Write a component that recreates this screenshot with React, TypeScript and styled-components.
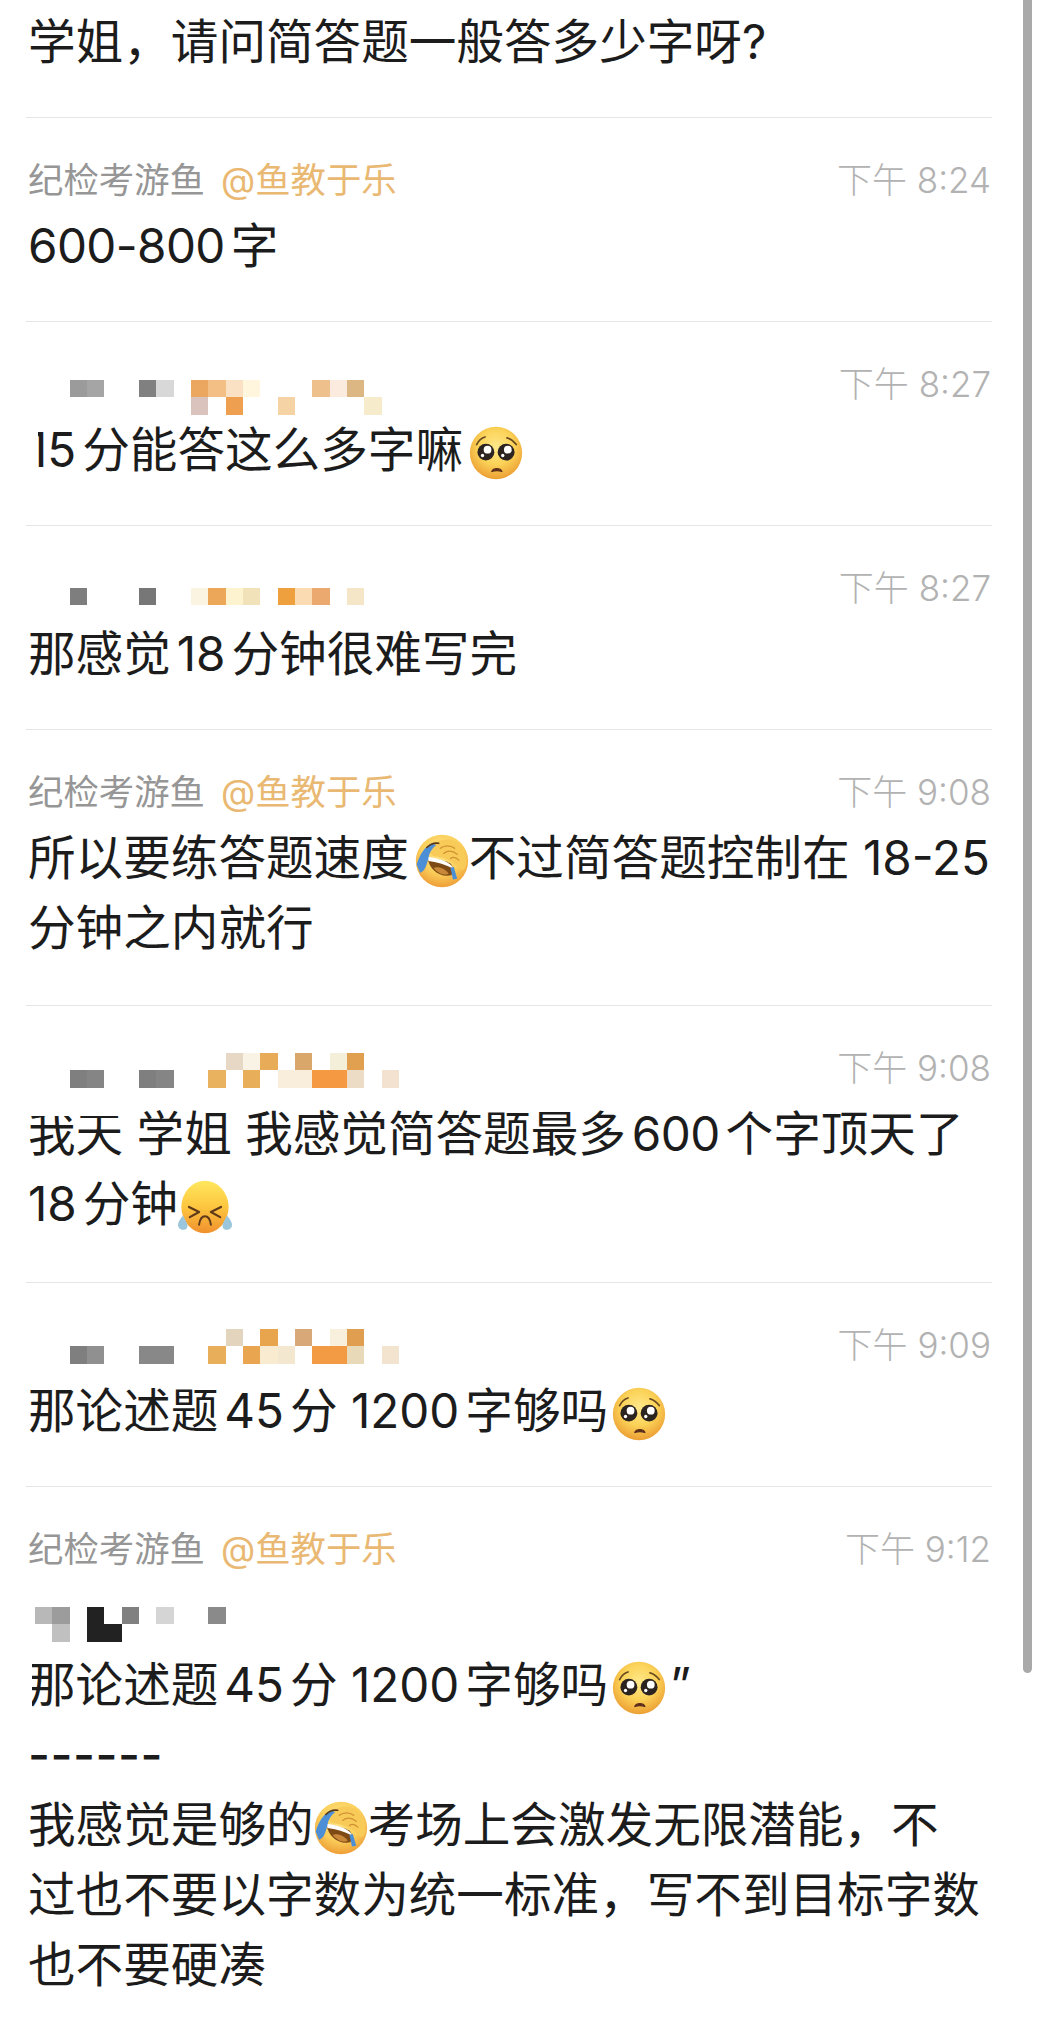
import styled, { createGlobalStyle } from 'styled-components';

const CELL = 17.33;
const COLUMNS = 21;

const GlobalStyle = createGlobalStyle`
  html, body {
    margin: 0;
    padding: 0;
    background: #fff;
  }
  body {
    font-family: Inter, "Noto Sans CJK SC", sans-serif;
    color: #1c1c1c;
  }
`;

const Page = styled.div`
  position: relative;
  width: 1041px;
  height: 2030px;
  overflow: hidden;
  box-sizing: border-box;
  padding: 7px 49px 0 26px;
`;

const ScrollThumb = styled.div`
  position: absolute;
  top: -10px;
  left: 1023px;
  width: 9px;
  height: 1683px;
  border-radius: 5px;
  background: #a9a9a9;
`;

const Row = styled.section<{ $tail?: number; $first?: boolean }>`
  padding: ${({ $first }) => ($first ? '0' : '39px')} 0 ${({ $tail }) => $tail ?? 40}px 0;
  border-bottom: 1px solid #e6e6e6;
`;

const LastRow = styled.section`
  padding-top: 39px;
`;

const Header = styled.header`
  display: flex;
  justify-content: space-between;
  align-items: center;
  height: 48px;
  margin-bottom: 6px;
  padding: 0 1px 0 2px;
`;

const Sender = styled.div`
  font-size: 35.4px;
  line-height: 48px;
  color: #969696;
`;

const Mention = styled.span`
  margin-left: 16px;
  color: #e9b872;
`;

const Time = styled.time`
  font-size: 35px;
  line-height: 46px;
  padding-bottom: 2px;
  color: #b2b2b2;
  font-weight: 300;
`;

const Mosaic = styled.div<{ $top: number }>`
  display: grid;
  grid-template-columns: repeat(${COLUMNS}, ${CELL}px);
  grid-auto-rows: ${CELL}px;
  align-self: flex-start;
  margin: ${({ $top }) => $top}px 0 0 7px;
`;

const QuoteMosaic = styled(Mosaic)`
  margin: 33px 0 8px 9px;
`;

const Cell = styled.i<{ $color: string }>`
  background: ${({ $color }) => $color || 'transparent'};
`;

const Body = styled.div`
  font-size: 47.6px;
  line-height: 70px;
  padding-left: 2px;
  text-autospace: normal;
`;

const Line = styled.div`
  position: relative;
  white-space: nowrap;
`;

const Num = styled.span`
  letter-spacing: -0.6px;
`;

const Mask = styled.span<{ $w: number; $h: number; $y?: number }>`
  position: absolute;
  left: 0;
  top: ${({ $y }) => $y ?? 0}px;
  width: ${({ $w }) => $w}px;
  height: ${({ $h }) => $h}px;
  background: #fff;
`;

const Dashes = styled.span`
  letter-spacing: 0.5px;
  font-weight: 500;
`;

const EmojiBox = styled.svg<{ $before?: number; $after?: number }>`
  display: inline-block;
  width: 54px;
  height: 54px;
  vertical-align: -13px;
  margin: 0 ${({ $after }) => $after ?? 0}px 0 ${({ $before }) => $before ?? 6}px;
`;

type EmojiProps = { before?: number; after?: number };

function Pleading({ before, after }: EmojiProps) {
  return (
    <EmojiBox viewBox="0 0 64 64" $before={before} $after={after}>
      <defs>
        <radialGradient id="plead-face" cx="50%" cy="38%" r="62%">
          <stop offset="0%" stopColor="#ffe88a" />
          <stop offset="55%" stopColor="#fbd257" />
          <stop offset="100%" stopColor="#ec9f34" />
        </radialGradient>
      </defs>
      <circle cx="32" cy="32" r="31" fill="url(#plead-face)" />
      <path d="M9 22 C11 18 15 14 19 13" fill="none" stroke="#6b4a20" strokeWidth="2" strokeLinecap="round" />
      <path d="M56 22 C53 18 49 15 45 14" fill="none" stroke="#6b4a20" strokeWidth="2" strokeLinecap="round" />
      <circle cx="20" cy="31" r="10" fill="#2b2320" />
      <circle cx="44" cy="31" r="10" fill="#2b2320" />
      <circle cx="22" cy="28" r="4.6" fill="#fff" />
      <circle cx="46" cy="28" r="4.6" fill="#fff" />
      <circle cx="16" cy="35" r="2" fill="#fff" />
      <circle cx="40" cy="35" r="2" fill="#fff" />
      <path d="M27 54 C29 49.5 37 49.5 39 54 C35 52.5 31 52.5 27 54 Z" fill="#5a2c1a" stroke="#5a2c1a" strokeWidth="1.4" strokeLinejoin="round" />
    </EmojiBox>
  );
}

function Squint({ before, after }: EmojiProps) {
  return (
    <EmojiBox viewBox="0 0 64 64" $before={before} $after={after}>
      <defs>
        <linearGradient id="squint-face" x1="0" y1="0" x2="0" y2="1">
          <stop offset="0%" stopColor="#ffe75e" />
          <stop offset="50%" stopColor="#fdc63f" />
          <stop offset="100%" stopColor="#f0902e" />
        </linearGradient>
      </defs>
      <ellipse cx="32" cy="32" rx="28" ry="31" fill="url(#squint-face)" />
      <path d="M13 32 L25 38 L14 44" fill="none" stroke="#5e3a1a" strokeWidth="2.6" strokeLinecap="round" strokeLinejoin="round" />
      <path d="M51 32 L39 38 L50 44" fill="none" stroke="#5e3a1a" strokeWidth="2.6" strokeLinecap="round" strokeLinejoin="round" />
      <path d="M25 53 C26 46 29 43 32 43 C35 43 38 46 39 53" fill="none" stroke="#5e3a1a" strokeWidth="2.4" strokeLinecap="round" />
      <path d="M6 42 C2 47 0 50 0 53 C0 57 3 59 6 59 C10 59 12 56 11 52 Z" fill="#9cc6dc" />
      <path d="M58 42 C62 47 64 50 64 53 C64 57 61 59 58 59 C54 59 52 56 53 52 Z" fill="#9cc6dc" />
    </EmojiBox>
  );
}

function Facepalm({ before, after }: EmojiProps) {
  return (
    <EmojiBox viewBox="0 0 64 64" $before={before} $after={after}>
      <defs>
        <radialGradient id="palm-face" cx="50%" cy="35%" r="65%">
          <stop offset="0%" stopColor="#ffe68a" />
          <stop offset="60%" stopColor="#fbcf5b" />
          <stop offset="100%" stopColor="#ee9f38" />
        </radialGradient>
      </defs>
      <circle cx="32" cy="32" r="31" fill="url(#palm-face)" />
      <path d="M15 29 C17 41 28 52 43 49 C46 44 45 38 42 35 C34 31 24 29 15 29 Z" fill="#7d4a16" />
      <path d="M15 27 C24 28 36 31 43 37 L45 41 C36 36 25 33 16 32 Z" fill="#fff" />
      <path d="M22 40 C28 38 36 41 40 47 C34 50 26 46 22 40 Z" fill="#c9873a" />
      <path d="M18 16 C24 8 36 4 46 8 C56 12 62 24 61 36 C60 41 57 44 54 42 C48 34 36 28 22 26 C18 24 16 20 18 16 Z" fill="#f8ca58" />
      <path d="M30 17 C35 13 42 13 47 17 M34 23 C39 19 45 20 50 24 M42 29 C45 27 49 28 52 31" fill="none" stroke="#cf9233" strokeWidth="1.5" strokeLinecap="round" />
      <path d="M20 11 C12 15 6 23 2 36 L6 46 C12 44 14 36 16 28 C17 22 20 17 25 13 Z" fill="#4d8fd6" />
      <path d="M42 40 L46 39 L50 53 L45 54 Z" fill="#4d8fd6" />
      <path d="M14 16 C18 12 23 10 28 11" fill="none" stroke="#5a3a18" strokeWidth="2" strokeLinecap="round" />
    </EmojiBox>
  );
}

const FISH_NAME = '纪检考游鱼';
const FISH_MENTION = '@鱼教于乐';

function FishSender() {
  return (
    <Sender>
      {FISH_NAME}
      <Mention>{FISH_MENTION}</Mention>
    </Sender>
  );
}

function Pixels({ rows, top = 0, quote }: { rows: string[][]; top?: number; quote?: boolean }) {
  const Wrap = quote ? QuoteMosaic : Mosaic;
  // short rows get padded so every row lines up on the grid
  const cells = rows.flatMap((r) => [...r, ...Array(COLUMNS - r.length).fill('')]);
  return (
    <Wrap $top={top}>
      {cells.map((color, i) => (
        <Cell key={i} $color={color} />
      ))}
    </Wrap>
  );
}

const _ = '';

const MOSAIC_A = [
  [_, _, '#9b9b9b', '#a5a5a5', _, _, '#808080', '#d8d8d8', _, '#eba75f', '#f3bf85', '#fbe1c3', '#fff6dd', _, _, _, '#eec08c', '#fbeade', '#dcb783'],
  [_, _, _, _, _, _, _, _, _, '#d9c3bc', _, '#ee9f50', _, _, '#f6d3a5', _, _, _, _, '#f6eccb'],
];

const MOSAIC_B = [
  [_, _, '#7e7e7e', _, _, _, '#777777', _, _, '#fbf4e0', '#eda758', '#fdf3cf', '#f1e2b9', _, '#ee9f3e', '#fbdcb2', '#eca96f', _, '#f6e6c8'],
];

const MOSAIC_C = [
  [_, _, _, _, _, _, _, _, _, _, _, '#e6d8c4', '#f9f3e6', '#e8ab58', _, '#d9a76a', _, '#f4efd9', '#e0a050'],
  [_, _, '#7f7f7f', '#858585', _, _, '#7f7f7f', '#858585', _, _, '#e8b25f', _, '#e9ae5a', _, '#f9eedc', '#f9eedc', '#f59a42', '#f59a42', '#ecdcc6', _, '#f3e2d0'],
];

const MOSAIC_D = [
  [_, _, _, _, _, _, _, _, _, _, _, '#e3d5bd', _, '#e8a54e', _, '#d9a878', _, '#f8f0dd', '#e09f50'],
  [_, _, '#7f7f7f', '#909090', _, _, '#888888', '#888888', _, _, '#e9ae5a', _, '#e9a550', '#f8ebd0', '#f3e7cf', _, '#f39a45', '#f39a45', '#e8d9b8', _, '#f3e4cf'],
];

const MOSAIC_E = [
  ['#b8b8b8', '#9c9c9c', _, '#222222', _, '#808080', _, '#d5d5d5', _, _, '#8a8a8a'],
  [_, '#c0c0c0', _, '#222222', '#222222'],
];

export default function App() {
  return (
    <Page>
      <GlobalStyle />
      <ScrollThumb />

      <Row $first>
        <Body>
          <Line>学姐，请问简答题一般答多少字呀?</Line>
        </Body>
      </Row>

      <Row>
        <Header>
          <FishSender />
          <Time>下午 8:24</Time>
        </Header>
        <Body>
          <Line>
            <Num>600-800</Num>字
          </Line>
        </Body>
      </Row>

      <Row>
        <Header>
          <Pixels rows={MOSAIC_A} top={19} />
          <Time>下午 8:27</Time>
        </Header>
        <Body>
          <Line>
            <Mask $w={10} $h={69} />
            15分能答这么多字嘛
            <Pleading />
          </Line>
        </Body>
      </Row>

      <Row>
        <Header>
          <Pixels rows={MOSAIC_B} top={23} />
          <Time>下午 8:27</Time>
        </Header>
        <Body>
          <Line>那感觉18分钟很难写完</Line>
        </Body>
      </Row>

      <Row $tail={42}>
        <Header>
          <FishSender />
          <Time>下午 9:08</Time>
        </Header>
        <Body>
          <Line>
            所以要练答题速度
            <Facepalm />
            不过简答题控制在 18-25
          </Line>
          <Line>分钟之内就行</Line>
        </Body>
      </Row>

      <Row $tail={43}>
        <Header>
          <Pixels rows={MOSAIC_C} top={8} />
          <Time>下午 9:08</Time>
        </Header>
        <Body>
          <Line>
            <Mask $w={100} $h={17} />
            我天 学姐 我感觉简答题最多<Num>600</Num>个字顶天了
          </Line>
          <Line>
            18分钟
            <Squint before={0} />
          </Line>
        </Body>
      </Row>

      <Row>
        <Header>
          <Pixels rows={MOSAIC_D} top={7} />
          <Time>下午 9:09</Time>
        </Header>
        <Body>
          <Line>
            那论述题45分 1200字够吗
            <Pleading before={4} />
          </Line>
        </Body>
      </Row>

      <LastRow>
        <Header>
          <FishSender />
          <Time>下午 9:12</Time>
        </Header>
        <Pixels rows={MOSAIC_E} quote />
        <Body>
          <Line>
            <Mask $w={4} $h={69} />
            那论述题45分 1200字够吗
            <Pleading before={4} after={4} />”
          </Line>
          <Line>
            <Dashes>------</Dashes>
          </Line>
          <Line>
            我感觉是够的
            <Facepalm before={0} />
            考场上会激发无限潜能，不
          </Line>
          <Line>过也不要以字数为统一标准，写不到目标字数</Line>
          <Line>也不要硬凑</Line>
        </Body>
      </LastRow>
    </Page>
  );
}
